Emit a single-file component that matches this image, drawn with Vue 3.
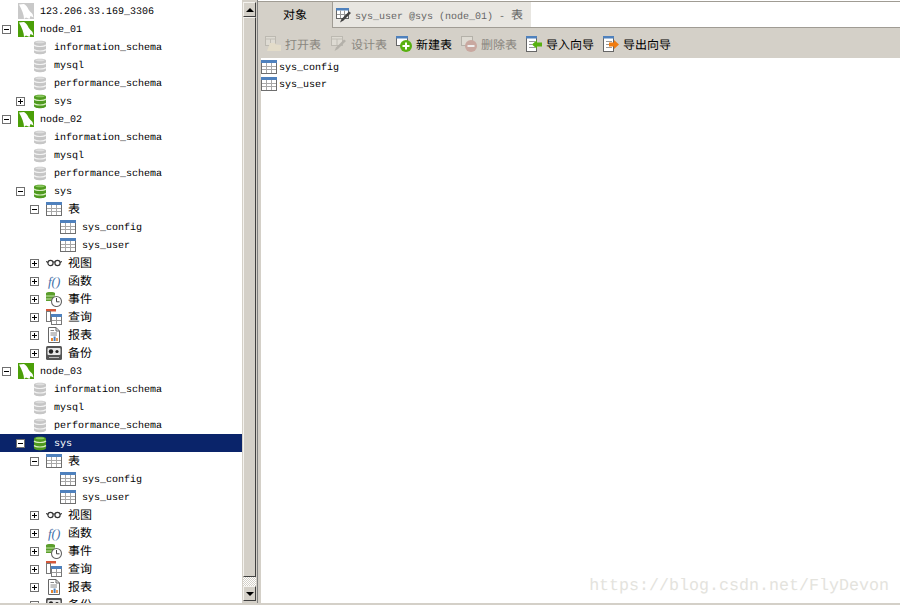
<script setup>
const schemas = () => [
  { d: 1, icon: 'db-off', label: 'information_schema' },
  { d: 1, icon: 'db-off', label: 'mysql' },
  { d: 1, icon: 'db-off', label: 'performance_schema' },
]
const children = [
  { d: 2, icon: 'table', label: '表', toggle: 'minus', cjk: true },
  { d: 3, icon: 'table', label: 'sys_config' },
  { d: 3, icon: 'table', label: 'sys_user' },
  { d: 2, icon: 'glasses', label: '视图', toggle: 'plus', cjk: true },
  { d: 2, icon: 'func', label: '函数', toggle: 'plus', cjk: true },
  { d: 2, icon: 'event', label: '事件', toggle: 'plus', cjk: true },
  { d: 2, icon: 'query', label: '查询', toggle: 'plus', cjk: true },
  { d: 2, icon: 'report', label: '报表', toggle: 'plus', cjk: true },
  { d: 2, icon: 'backup', label: '备份', toggle: 'plus', cjk: true },
]
const rows = [
  { d: 0, icon: 'dolphin-off', label: '123.206.33.169_3306' },
  { d: 0, icon: 'dolphin', label: 'node_01', toggle: 'minus' },
  ...schemas(),
  { d: 1, icon: 'db', label: 'sys', toggle: 'plus' },
  { d: 0, icon: 'dolphin', label: 'node_02', toggle: 'minus' },
  ...schemas(),
  { d: 1, icon: 'db', label: 'sys', toggle: 'minus' },
  ...children,
  { d: 0, icon: 'dolphin', label: 'node_03', toggle: 'minus' },
  ...schemas(),
  { d: 1, icon: 'db', label: 'sys', toggle: 'minus', selected: true },
  ...children,
]
const tools = [
  { icon: 'tb-open', label: '打开表', off: true, first: true },
  { icon: 'tb-design', label: '设计表', off: true },
  { icon: 'tb-new', label: '新建表' },
  { icon: 'tb-delete', label: '删除表', off: true },
  { icon: 'tb-import', label: '导入向导' },
  { icon: 'tb-export', label: '导出向导' },
]
const tables = ['sys_config', 'sys_user']
</script>

<template>
  <div class="app">
    <svg class="defs" width="0" height="0" aria-hidden="true">
      <defs>
        <symbol id="dolphin" viewBox="0 0 16 16">
          <rect width="16" height="16" fill="#4b9f08" />
          <path d="M1 1.5 L6 1 C8 2 9.5 4 10.5 6.5 C11.5 8.5 13.5 9.5 14.5 11 L15.5 14.5 L12.5 13 L11.5 16 L8 14.5 L6 16 C6 12 4 7 1 1.5 Z" fill="#fff" />
        </symbol>
        <symbol id="dolphin-off" viewBox="0 0 16 16">
          <rect width="16" height="16" fill="#c9c9c9" />
          <path d="M1 1.5 L6 1 C8 2 9.5 4 10.5 6.5 C11.5 8.5 13.5 9.5 14.5 11 L15.5 14.5 L12.5 13 L11.5 16 L8 14.5 L6 16 C6 12 4 7 1 1.5 Z" fill="#fff" />
        </symbol>
        <symbol id="db" viewBox="0 0 16 16">
          <path d="M2 3.5 C2 1 14 1 14 3.5 L14 13 C14 16 2 16 2 13 Z" fill="#4f9a1e" />
          <path d="M2 6 C4 8 12 8 14 6 M2 10.5 C4 12.5 12 12.5 14 10.5" fill="none" stroke="#d6ecc0" stroke-width="1.2" />
          <ellipse cx="8" cy="3.2" rx="4.5" ry="1" fill="#8cc860" />
        </symbol>
        <symbol id="db-off" viewBox="0 0 16 16">
          <path d="M2 3.5 C2 1 14 1 14 3.5 L14 13 C14 16 2 16 2 13 Z" fill="#c6c6c6" />
          <path d="M2 6 C4 8 12 8 14 6 M2 10.5 C4 12.5 12 12.5 14 10.5" fill="none" stroke="#f2f2f2" stroke-width="1.2" />
          <ellipse cx="8" cy="3.2" rx="4.5" ry="1" fill="#dedede" />
        </symbol>
        <symbol id="table" viewBox="0 0 16 16">
          <rect x="0.5" y="1.5" width="15" height="13" fill="#fff" stroke="#6e6e6e" />
          <rect x="0" y="1" width="16" height="3" fill="#4f81bd" />
          <path d="M5.5 4 V14 M10.5 4 V14 M1 7.5 H15 M1 10.5 H15" stroke="#a8a8a8" />
        </symbol>
        <symbol id="glasses" viewBox="0 0 16 16">
          <circle cx="4.5" cy="8" r="2.6" fill="#fff" stroke="#333" stroke-width="1.2" />
          <circle cx="11.5" cy="8" r="2.6" fill="#fff" stroke="#333" stroke-width="1.2" />
          <path d="M7 7 H9 M0 6.5 L2 7.5 M14 7.5 L16 6.5" stroke="#333" stroke-width="1.1" />
        </symbol>
        <symbol id="func" viewBox="0 0 16 16">
          <text x="2" y="13" class="ficon">f()</text>
        </symbol>
        <symbol id="event" viewBox="0 0 16 16">
          <path d="M0 2 C0 0.5 9 0.5 9 2 L9 10 L0 10 Z" fill="#5b9e2c" />
          <path d="M0 5 H9 M0 8 H6" stroke="#c5e2a8" />
          <circle cx="10.5" cy="10.5" r="5" fill="#fff" stroke="#666" stroke-width="1.1" />
          <path d="M10.5 7 V10.8 H13.5" fill="none" stroke="#444" />
        </symbol>
        <symbol id="query" viewBox="0 0 16 16">
          <rect x="0" y="0" width="10" height="2.5" fill="#d4583a" />
          <rect x="0.5" y="2.5" width="4" height="10" fill="#fff" stroke="#777" />
          <rect x="5.5" y="6" width="10" height="9.5" fill="#fff" stroke="#777" />
          <rect x="5" y="5" width="11" height="3" fill="#4f81bd" />
          <path d="M10.5 8 V15 M6 11.5 H15" stroke="#999" />
        </symbol>
        <symbol id="report" viewBox="0 0 16 16">
          <path d="M2.5 0.5 H10 L13.5 4 V15.5 H2.5 Z" fill="#fff" stroke="#666" />
          <path d="M10 0.5 V4 H13.5" fill="none" stroke="#666" />
          <path d="M4.5 3.5 H8 M4.5 6 H11 M4.5 8 H11" stroke="#888" />
          <rect x="5" y="11" width="2" height="3" fill="#e8862c" />
          <rect x="7.6" y="9.5" width="2" height="4.5" fill="#4f81bd" />
          <rect x="10.2" y="11" width="1.6" height="3" fill="#e8862c" />
        </symbol>
        <symbol id="backup" viewBox="0 0 16 16">
          <rect x="0" y="1" width="16" height="14" rx="1.5" fill="#555" />
          <rect x="1.5" y="3" width="13" height="7" rx="1" fill="#e9e9e9" />
          <circle cx="5" cy="6.5" r="2.2" fill="#222" />
          <circle cx="11" cy="6.5" r="1.6" fill="#222" />
          <path d="M3 12.5 H13" stroke="#bbb" />
        </symbol>
        <symbol id="tb-open" viewBox="0 0 16 16">
          <rect x="0.5" y="0.5" width="10" height="9" fill="#dedbd3" stroke="#bcb9b1" />
          <path d="M0.5 3 H10.5 M5.5 3 V9" stroke="#c0bdb5" />
          <path d="M2 15 L5 7 L10 7 L11 8.5 L16 9 L16 15 Z" fill="#e3dcc9" />
        </symbol>
        <symbol id="tb-design" viewBox="0 0 16 16">
          <rect x="0.5" y="0.5" width="11" height="9" fill="#dedbd3" stroke="#bcb9b1" />
          <path d="M0.5 3 H11.5 M6 3 V9" stroke="#c0bdb5" />
          <path d="M15 5 L7 13 L3.5 15 L5 11.5 L13 3.5 Z" fill="#b4b1aa" />
        </symbol>
        <symbol id="tb-new" viewBox="0 0 16 16">
          <rect x="0.5" y="0.5" width="11" height="9" fill="#fff" stroke="#666" />
          <rect x="0" y="0" width="12" height="2.5" fill="#4f81bd" />
          <circle cx="10" cy="10" r="6" fill="#58b010" />
          <path d="M10 6.5 V13.5 M6.5 10 H13.5" stroke="#fff" stroke-width="2" />
        </symbol>
        <symbol id="tb-delete" viewBox="0 0 16 16">
          <rect x="0.5" y="0.5" width="11" height="9" fill="#dedbd3" stroke="#b4b1a9" />
          <circle cx="10" cy="10" r="6" fill="#c9a8a0" />
          <path d="M6.5 10 H13.5" stroke="#eee" stroke-width="2" />
        </symbol>
        <symbol id="tb-import" viewBox="0 0 16 16">
          <rect x="0.5" y="0.5" width="10" height="15" fill="#fff" stroke="#666" />
          <rect x="0" y="0" width="11" height="2.5" fill="#4f81bd" />
          <path d="M3 5.5 H9 M3 8.5 H6 M3 11.5 H9" stroke="#999" />
          <path d="M6 8.5 L11 4 V6.5 H16 V10.5 H11 V13 Z" fill="#58b010" />
        </symbol>
        <symbol id="tb-export" viewBox="0 0 16 16">
          <rect x="0.5" y="0.5" width="10" height="15" fill="#fff" stroke="#666" />
          <rect x="0" y="0" width="11" height="2.5" fill="#4f81bd" />
          <path d="M3 5.5 H9 M3 8.5 H6 M3 11.5 H9" stroke="#999" />
          <path d="M16 8.5 L11 4 V6.5 H6 V10.5 H11 V13 Z" fill="#f07c10" />
        </symbol>
        <symbol id="tab-table" viewBox="0 0 16 16">
          <rect x="0.5" y="1.5" width="12" height="10" fill="#fff" stroke="#666" />
          <rect x="0" y="1" width="13" height="2.5" fill="#4f81bd" />
          <path d="M4.5 3.5 V11 M8.5 3.5 V11 M1 7.5 H12" stroke="#999" />
          <path d="M15 6 L7.5 13.5 L4 15.5 L5.5 12 L13 4.5 Z" fill="#444" />
        </symbol>
      </defs>
    </svg>

    <div class="body">
      <div class="tree">
        <div
          v-for="(row, i) in rows"
          :key="i"
          class="row"
          :class="{ selected: row.selected }"
          :style="{ paddingLeft: row.d * 14 + 2 + 'px' }"
        >
          <span class="slot">
            <span v-if="row.toggle" class="toggle" :class="row.toggle"></span>
          </span>
          <svg class="icon" width="16" height="16"><use :href="'#' + row.icon" /></svg>
          <span class="label" :class="{ cjk: row.cjk }">{{ row.label }}</span>
        </div>
      </div>

      <div class="scrollbar">
        <div class="sb-btn"><span class="arrow up"></span></div>
        <div class="sb-thumb"></div>
        <div class="sb-track"></div>
        <div class="sb-btn"><span class="arrow down"></span></div>
      </div>

      <div class="main">
        <div class="tabs">
          <div class="tab active">对象</div>
          <div class="tab doc">
            <svg class="icon" width="16" height="16"><use href="#tab-table" /></svg>
            <span class="doc-title">sys_user @sys (node_01) - <span class="cjk">表</span></span>
          </div>
          <div class="tab-rest"></div>
        </div>
        <div class="toolbar">
          <div
            v-for="t in tools"
            :key="t.icon"
            class="tool"
            :class="{ off: t.off, first: t.first }"
          >
            <svg class="icon" width="16" height="16"><use :href="'#' + t.icon" /></svg>
            <span class="cjk">{{ t.label }}</span>
          </div>
        </div>
        <div class="list">
          <div v-for="t in tables" :key="t" class="list-row">
            <svg class="icon" width="16" height="16"><use href="#table" /></svg>
            <span class="label">{{ t }}</span>
          </div>
          <div class="watermark">https://blog.csdn.net/FlyDevon</div>
        </div>
      </div>
    </div>
    <div class="status"></div>
  </div>
</template>

<style scoped>
.app {
  width: 900px;
  height: 605px;
  display: flex;
  flex-direction: column;
  overflow: hidden;
  background: #fff;
  font-family: "Liberation Mono", "Noto Sans CJK SC", monospace;
  font-size: 10px;
  color: #000;
  text-rendering: geometricPrecision;
}
.defs {
  position: absolute;
}
.body {
  flex: 1;
  min-height: 0;
  display: flex;
}
.status {
  height: 2px;
  background: #d4d0c8;
}
.tree {
  width: 242px;
  padding-top: 2px;
  overflow: hidden;
}
.row {
  height: 18px;
  display: flex;
  align-items: center;
  white-space: nowrap;
}
.row.selected {
  background: #0a246a;
  color: #fff;
}
.slot {
  width: 16px;
  height: 18px;
  display: flex;
  align-items: center;
  flex: none;
}
.toggle {
  position: relative;
  width: 9px;
  height: 9px;
  box-sizing: border-box;
  border: 1px solid #707070;
  background: #fff;
}
.toggle::before {
  content: "";
  position: absolute;
  left: 1px;
  top: 3px;
  width: 5px;
  height: 1px;
  background: #000;
}
.toggle.plus::after {
  content: "";
  position: absolute;
  left: 3px;
  top: 1px;
  width: 1px;
  height: 5px;
  background: #000;
}
.icon {
  flex: none;
  display: block;
}
.ficon {
  font-family: "Liberation Serif", serif;
  font-style: italic;
  font-size: 13px;
  fill: #3f6fa8;
}
.label {
  margin-left: 6px;
  line-height: 14px;
  padding-top: 4px;
}
.label.cjk {
  line-height: 18px;
  padding-top: 0;
}
.cjk {
  font-family: "Noto Sans CJK SC", sans-serif;
  font-size: 12px;
}
.scrollbar {
  width: 16px;
  box-sizing: border-box;
  padding: 2px 1px 0 1px;
  display: flex;
  flex-direction: column;
  background: #d4d0c8;
  border-right: 1px solid #808080;
}
.sb-btn,
.sb-thumb {
  box-sizing: border-box;
  background: #d4d0c8;
  border: 1px solid;
  border-color: #f4f2ee #404040 #404040 #f4f2ee;
}
.sb-btn {
  height: 15px;
  display: flex;
  align-items: center;
  justify-content: center;
  flex: none;
}
.sb-thumb {
  height: 560px;
  flex: none;
}
.sb-track {
  height: 9px;
  flex: none;
  background: repeating-conic-gradient(#fff 0 25%, #d4d0c8 0 50%) 0 0 / 2px 2px;
}
.arrow {
  width: 0;
  height: 0;
  border-left: 4px solid transparent;
  border-right: 4px solid transparent;
}
.arrow.up {
  border-bottom: 4px solid #000;
}
.arrow.down {
  border-top: 4px solid #000;
}
.main {
  flex: 1;
  min-width: 0;
  display: flex;
  flex-direction: column;
  background: #d4d0c8;
}
.tabs {
  height: 28px;
  box-sizing: border-box;
  display: flex;
  flex: none;
  background: #fff;
  padding-top: 1px;
}
.tab {
  display: flex;
  align-items: center;
  box-sizing: border-box;
}
.active {
  width: 74px;
  justify-content: center;
  background: #d4d0c8;
  font-family: "Noto Sans CJK SC", sans-serif;
  font-size: 12px;
  border-top: 1px solid #a09c94;
  padding-bottom: 2px;
}
.doc {
  width: 199px;
  padding-left: 3px;
  gap: 3px;
  background: #e8e6e1;
  border-left: 1px solid #a09c94;
  border-bottom: 1px solid #a09c94;
  border-top: 1px solid #a09c94;
  color: #666;
}
.doc-title {
  white-space: pre;
}
.tab-rest {
  flex: 1;
  background: #fff;
  border-top: 1px solid #a09c94;
  border-bottom: 1px solid #a09c94;
}
.toolbar {
  height: 30px;
  box-sizing: border-box;
  flex: none;
  display: flex;
  align-items: center;
  gap: 9px;
  padding-left: 8px;
  padding-top: 2px;
}
.tool {
  display: flex;
  align-items: center;
  gap: 4px;
}
.tool.first {
  margin-left: -1px;
  margin-right: 1px;
}
.tool.off {
  color: #8a8780;
}
.list {
  position: relative;
  flex: 1;
  min-height: 0;
  margin-left: 3px;
  background: #fff;
}
.list-row {
  height: 17px;
  display: flex;
  align-items: center;
  white-space: nowrap;
}
.list-row .label {
  margin-left: 2px;
}
.watermark {
  position: absolute;
  right: 11px;
  bottom: 7px;
  font-family: "Liberation Mono", monospace;
  font-size: 16.67px;
  color: #e4e3dd;
  white-space: nowrap;
}
</style>
